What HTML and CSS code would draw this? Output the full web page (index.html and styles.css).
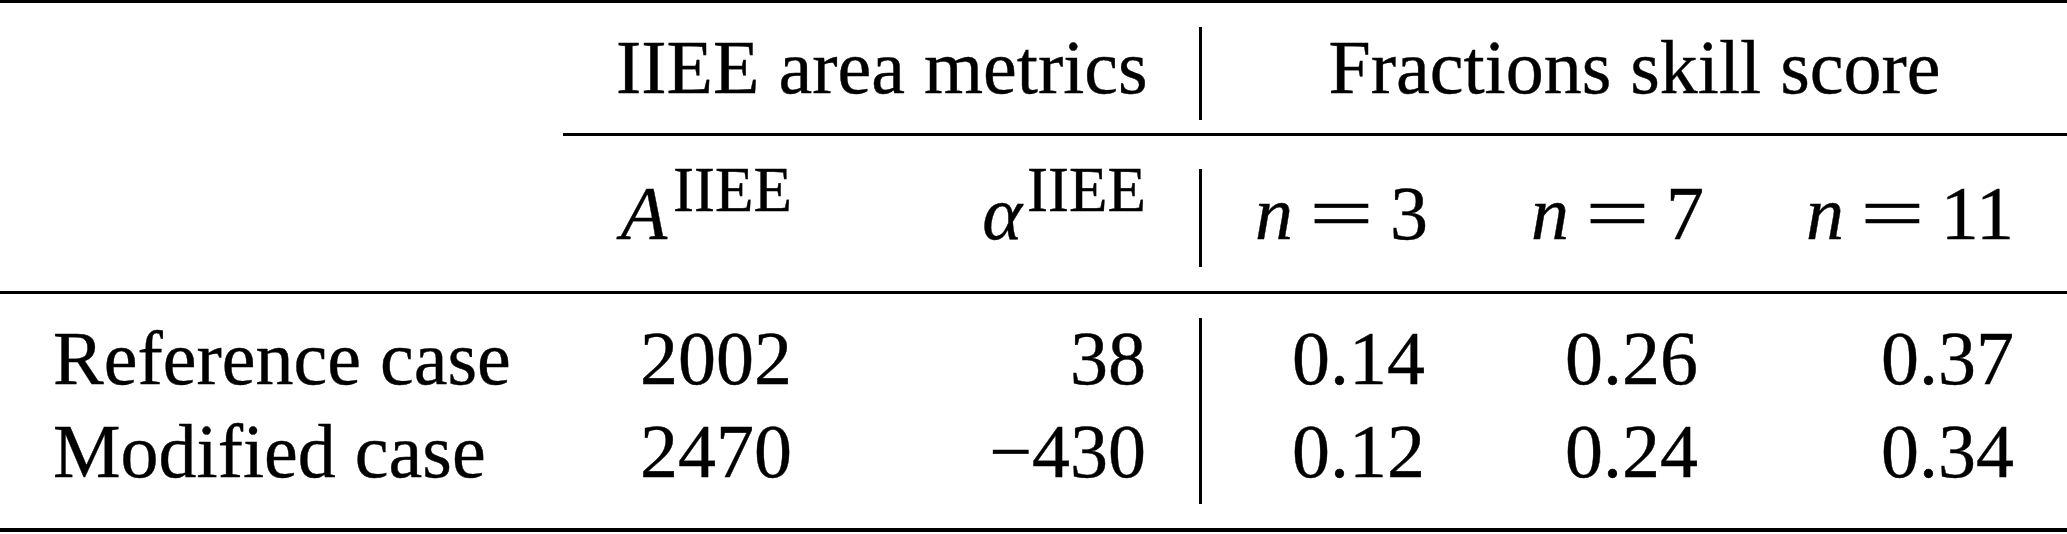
FILE: index.html
```html
<!DOCTYPE html>
<html lang="en">
<head>
  <meta charset="UTF-8" />
  <title>IIEE area metrics and fractions skill score</title>
  <link rel="stylesheet" href="styles.css">
</head>
<body>

  <table class="scores">
    <colgroup>
      <col class="col-label">
      <col class="col-area">
      <col class="col-alpha">
      <col class="col-n3">
      <col class="col-n7">
      <col class="col-n11">
    </colgroup>

    <tr class="gap"><td colspan="6"><div class="line top"></div></td></tr>

    <tr class="head">
      <td></td>
      <td colspan="2" class="center">IIEE area metrics</td>
      <td colspan="3" class="center sep">Fractions skill score</td>
    </tr>

    <tr class="gap"><td></td><td colspan="5"><div class="line cmid"></div></td></tr>

    <tr class="sub">
      <td></td>
      <td class="num"><i>A</i><sup>IIEE</sup></td>
      <td class="num"><i>α</i><sup class="after-alpha">IIEE</sup></td>
      <td class="num sep"><i>n</i><span class="eq">=</span>3</td>
      <td class="num"><i>n</i><span class="eq">=</span>7</td>
      <td class="num"><i>n</i><span class="eq">=</span>11</td>
    </tr>

    <tr class="gap"><td colspan="6"><div class="line mid"></div></td></tr>

    <tr class="row">
      <td>Reference case</td>
      <td class="num">2002</td>
      <td class="num">38</td>
      <td class="num sep">0.14</td>
      <td class="num">0.26</td>
      <td class="num">0.37</td>
    </tr>
    <tr class="row">
      <td>Modified case</td>
      <td class="num">2470</td>
      <td class="num">&minus;430</td>
      <td class="num sep">0.12</td>
      <td class="num">0.24</td>
      <td class="num">0.34</td>
    </tr>

    <tr class="gap"><td colspan="6"><div class="line bottom"></div></td></tr>
  </table>

</body>
</html>
```

FILE: styles.css
```css
* {
  box-sizing: border-box;
}

body {
  margin: 0;
  background: #fff;
  color: #000;
  font-family: "Liberation Serif", "Times New Roman", serif;
}

.scores {
  width: 2067px;
  table-layout: fixed;
  border-collapse: separate;
  border-spacing: 0;
  font-size: 76px;
  line-height: 81px;
  -webkit-text-stroke: 0.4px #000;
}

.col-label { width: 563px; }
.col-area  { width: 282px; }
.col-alpha { width: 354px; }
.col-n3    { width: 279px; }
.col-n7    { width: 273px; }
.col-n11   { width: 316px; }

.scores td {
  padding: 0 53px;
  vertical-align: top;
  white-space: nowrap;
  text-align: left;
}

.scores td.num {
  text-align: right;
}

.scores td.center {
  text-align: center;
}

.scores td.sep {
  border-left: 3px solid #000;
}

.head { height: 93px; }
.sub { height: 98px; }
.sub td { padding-top: 4px; }
.row { height: 93px; }

/* booktabs-style rules */
.scores .gap td {
  padding: 0;
}

.line {
  background: #000;
}

.line.top {
  height: 3px;
  margin-bottom: 24px;
}

.line.cmid {
  height: 3px;
  margin: 13px 0 33px;
}

.line.mid {
  height: 3px;
  margin: 24px 0;
}

.line.bottom {
  height: 4px;
  margin-top: 24px;
}

i {
  font-style: italic;
}

sup {
  font-size: 63px;
  line-height: 0;
  vertical-align: 28px;
  margin-left: 6px;
}

sup.after-alpha {
  margin-left: 5px;
}

/* math "=" is wider than the text one */
.eq {
  display: inline-block;
  transform: scaleX(1.5);
  margin: 0 27px;
}
```
